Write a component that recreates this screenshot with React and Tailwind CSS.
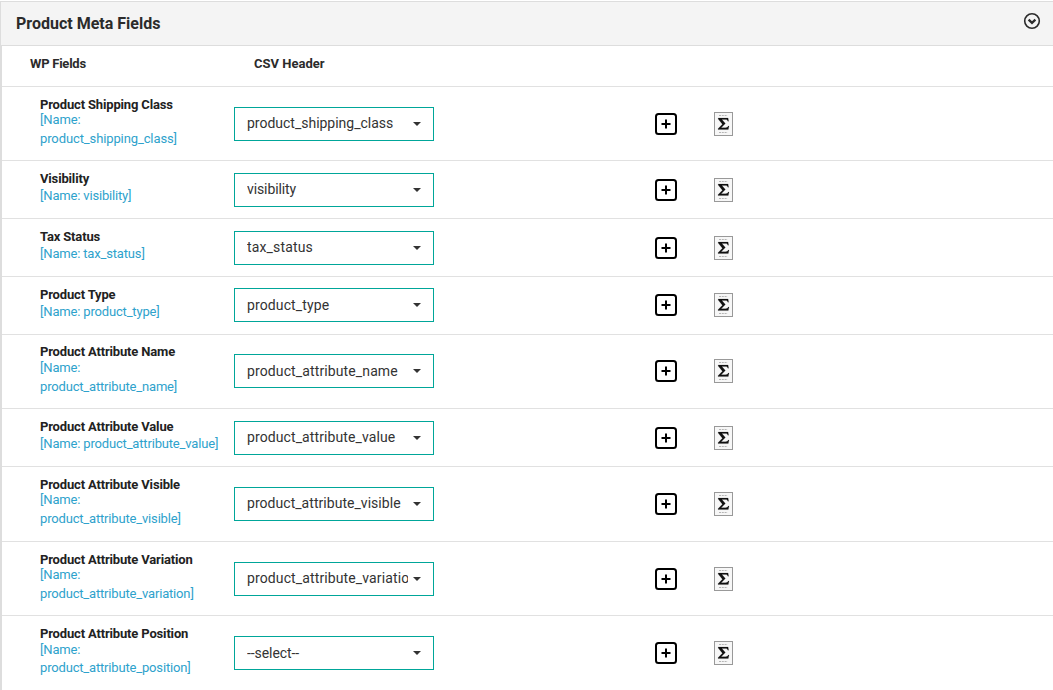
const rows = [
  { title: 'Product Shipping Class', name: 'product_shipping_class', wrap: true, row: 'h-[74px]', label: 'pt-[9px]', control: 'pt-[20px]', tracking: 'tracking-[-0.01px]', nameTracking: 'tracking-[-0.11px]' },
  { title: 'Visibility', name: 'visibility', row: 'h-[58px]', label: 'pt-[9px]', control: 'pt-[12px]', tracking: 'tracking-[-0.1px]' },
  { title: 'Tax Status', name: 'tax_status', row: 'h-[58px]', label: 'pt-[9px]', control: 'pt-[12px]', tracking: 'tracking-[0.15px]' },
  { title: 'Product Type', name: 'product_type', row: 'h-[58px]', label: 'pt-[9px]', control: 'pt-[11px]', text: 'pb-[1px]', tracking: 'tracking-[0.12px]' },
  { title: 'Product Attribute Name', name: 'product_attribute_name', wrap: true, row: 'h-[74px]', label: 'pt-[8px]', nameClass: '-mt-[3px] leading-[19px]', control: 'pt-[19px]', text: 'pb-[1px]' },
  { title: 'Product Attribute Value', name: 'product_attribute_value', row: 'h-[58px]', label: 'pt-[9px]', control: 'pt-[12px]', tracking: 'tracking-[0.1px]' },
  { title: 'Product Attribute Visible', name: 'product_attribute_visible', wrap: true, row: 'h-[75px]', label: 'pt-[9px]', control: 'pt-[20px]', tracking: 'tracking-[0.04px]' },
  { title: 'Product Attribute Variation', name: 'product_attribute_variation', wrap: true, row: 'h-[74px]', label: 'pt-[9px]', control: 'pt-[20px]' },
  { title: 'Product Attribute Position', name: 'product_attribute_position', value: '--select--', wrap: true, row: 'h-[75px]', label: 'pt-[9px]', nameClass: '-mt-[2px] leading-[18px]', control: 'pt-[20px]', text: 'pb-[1px]', tracking: 'tracking-[-0.08px]' },
];

function ChevronCircle() {
  return (
    <svg className="h-[18px] w-[18px]" viewBox="0 0 18 18" fill="none" stroke="#2b2b2b">
      <circle cx="9" cy="9" r="7.3" strokeWidth="1.6" />
      <path d="M5.6 7.6 9 10.8l3.400-3.200" strokeWidth="2.3" />
    </svg>
  );
}

function PlusBox() {
  return (
    <svg className="h-[22px] w-[22px]" viewBox="0 0 22 22" fill="none" stroke="#000">
      <rect x="1" y="1" width="20" height="20" rx="2.5" strokeWidth="2" />
      <path d="M11 6.500v9M6.500 11h9" strokeWidth="2" />
    </svg>
  );
}

function SigmaBox() {
  return (
    <svg className="h-6 w-[19px]" viewBox="0 0 19 24">
      <rect x=".5" y=".5" width="18" height="23" fill="#f7f7f7" stroke="#999" />
      <path d="M5 3.500h8.500M5 20.500h8.500" stroke="#b5b5b5" strokeDasharray="2 .8" />
      <path d="M4.200 6h9.900l.5 3.300h-.7c-.5-1.300-1.100-1.700-2.600-1.700H7.900l3.500 3.800-4.200 4.300h4.300c1.600 0 2.200-.5 2.700-1.700h.8L14.300 17.600H4v-.8l4.400-4.600L4.200 7.100z" fill="#111" stroke="#111" strokeWidth=".15" />
    </svg>
  );
}

function Select({ value, text, tracking }) {
  return (
    <div className="flex h-[34px] w-[200px] items-center border border-[#00a699] bg-white pl-3">
      <div className={`w-[161px] overflow-hidden text-[14px] leading-5 whitespace-nowrap text-[#333] ${text || 'pb-[2px]'} ${tracking || 'tracking-[0.12px]'}`}>
        {value}
      </div>
      <svg className="ml-[5px] h-1 w-2" viewBox="0 0 8 4">
        <path d="M0 0h8L4 4z" fill="#333" />
      </svg>
    </div>
  );
}

function FieldRow({ item }) {
  const nameClass = item.nameClass || (item.wrap ? '-mt-[4px] leading-[19px]' : '-mt-[2px] leading-[19px]');
  return (
    <div className={`flex shrink-0 border-t border-[#e1e1e1] ${item.row}`}>
      <div className={`w-[232px] shrink-0 pl-[38px] text-[13px] ${item.label}`}>
        <div className="leading-[18px] font-bold tracking-[-0.16px] text-[#222]">{item.title}</div>
        <div className={`text-[#2ea2cc] ${nameClass} ${item.nameTracking || 'tracking-[-0.17px]'}`}>
          [Name:{item.wrap ? <br /> : ' '}{item.name}]
        </div>
      </div>
      <div className={`flex items-start ${item.control}`}>
        <Select value={item.value || item.name} text={item.text} tracking={item.tracking} />
        <div className="mt-[6px] ml-[221px]"><PlusBox /></div>
        <div className="mt-[5px] ml-[37px]"><SigmaBox /></div>
      </div>
    </div>
  );
}

export default function App() {
  return (
    <div className="flex h-[690px] w-full flex-col overflow-hidden bg-white pt-px font-['Roboto',sans-serif] text-[#2b2b2b]">
      <header className="flex h-[45px] shrink-0 items-start justify-between border-y border-l border-[#ddd] bg-[#f4f4f4] pt-[10px] pr-[12px] pl-[15px]">
        <h2 className="text-[16px] leading-6 font-bold">Product Meta Fields</h2>
        <ChevronCircle />
      </header>
      <main className="flex grow flex-col border-l-2 border-[#ddd]">
        <div className="flex h-[40px] shrink-0 pt-2 text-[13px] leading-5 font-bold">
          <div className="w-[252px] pl-7 tracking-[-0.24px]">WP Fields</div>
          <div>CSV Header</div>
        </div>
        {rows.map((item) => <FieldRow key={item.name} item={item} />)}
      </main>
    </div>
  );
}
